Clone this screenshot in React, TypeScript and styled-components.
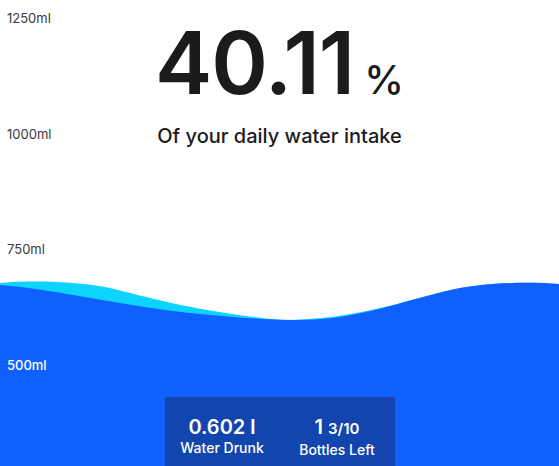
import React from 'react';
import styled, { createGlobalStyle } from 'styled-components';

const GlobalStyle = createGlobalStyle`
	html, body {
		margin: 0;
		padding: 0;
		background: #ffffff;
	}
	body {
		font-family: 'Inter', 'Noto Sans', sans-serif;
	}
`;

const percent = 40.11;
const scale = ['1250ml', '1000ml', '750ml', '500ml'];

const App: React.FC = () => {
	return (
		<>
			<GlobalStyle />
			<Screen>
				<Water style={{ height: `calc(${percent}% + 9px)` }}>
					<svg viewBox='0 0 559 196' preserveAspectRatio='none'>
						<path
							d='M0,13 C40,10 80,12 110,18 C150,28 200,42 280,50 C360,50 410,28 460,18 C500,12 530,12 559,14 L559,196 L0,196 Z'
							fill='#0dd3ff'
						/>
						<path
							d='M0,15 C60,20 120,36 200,44 C240,48 270,50 300,50 C360,50 410,28 460,18 C500,12 530,12 559,14 L559,196 L0,196 Z'
							fill='#1060ff'
						/>
					</svg>
				</Water>

				<Scale>
					{scale.map((mark, i) => (
						<Mark key={mark} $onWater={i === scale.length - 1}>
							{mark}
						</Mark>
					))}
				</Scale>

				<Content>
					<Percent>
						40.11<small>%</small>
					</Percent>
					<Caption>Of your daily water intake</Caption>
				</Content>

				<Stats>
					<Stat>
						<StatValue>0.602 l</StatValue>
						<StatLabel>Water Drunk</StatLabel>
					</Stat>
					<Stat>
						<StatValue>
							1 <span>3/10</span>
						</StatValue>
						<StatLabel>Bottles Left</StatLabel>
					</Stat>
				</Stats>
			</Screen>
		</>
	);
};

export default App;

const Screen = styled.main`
	position: relative;
	width: 559px;
	height: 466px;
	overflow: hidden;
	display: flex;
	flex-direction: column;
	align-items: center;
	background: #ffffff;
`;

const Water = styled.div`
	position: absolute;
	left: 0;
	right: 0;
	bottom: 0;

	svg {
		display: block;
		width: 100%;
		height: 100%;
	}
`;

const Scale = styled.div`
	position: absolute;
	top: 10px;
	left: 7px;
	display: flex;
	flex-direction: column;
	gap: 99.5px;
`;

const Mark = styled.span<{ $onWater?: boolean }>`
	font-size: 13px;
	line-height: 16px;
	color: ${({ $onWater }) => ($onWater ? '#ffffff' : '#3a3a3a')};
	font-weight: ${({ $onWater }) => ($onWater ? 500 : 400)};
`;

const Content = styled.section`
	position: relative;
	display: flex;
	flex-direction: column;
	align-items: center;
	padding-top: 20px;
	gap: 1px;
	color: #1b1b1d;
`;

const Percent = styled.h1`
	margin: 0;
	font-size: 86px;
	line-height: 86px;
	font-weight: 600;
	letter-spacing: -1px;

	small {
		font-size: 40px;
		font-weight: 500;
		margin-left: 10px;
		letter-spacing: 0;
	}
`;

const Caption = styled.p`
	margin: 0;
	font-size: 20px;
	line-height: 24px;
	font-weight: 500;
`;

const Stats = styled.section`
	position: relative;
	margin-top: auto;
	width: 230px;
	height: 69px;
	box-sizing: border-box;
	padding-top: 18px;
	display: grid;
	grid-template-columns: 1fr 1fr;
	background: #1245ad;
	color: #ffffff;
`;

const Stat = styled.div`
	display: flex;
	flex-direction: column;
	align-items: center;
`;

const StatValue = styled.span`
	font-size: 20px;
	line-height: 24px;
	font-weight: 600;

	span {
		font-size: 15px;
	}
`;

const StatLabel = styled.span`
	font-size: 14px;
	line-height: 18px;
	font-weight: 500;
`;
